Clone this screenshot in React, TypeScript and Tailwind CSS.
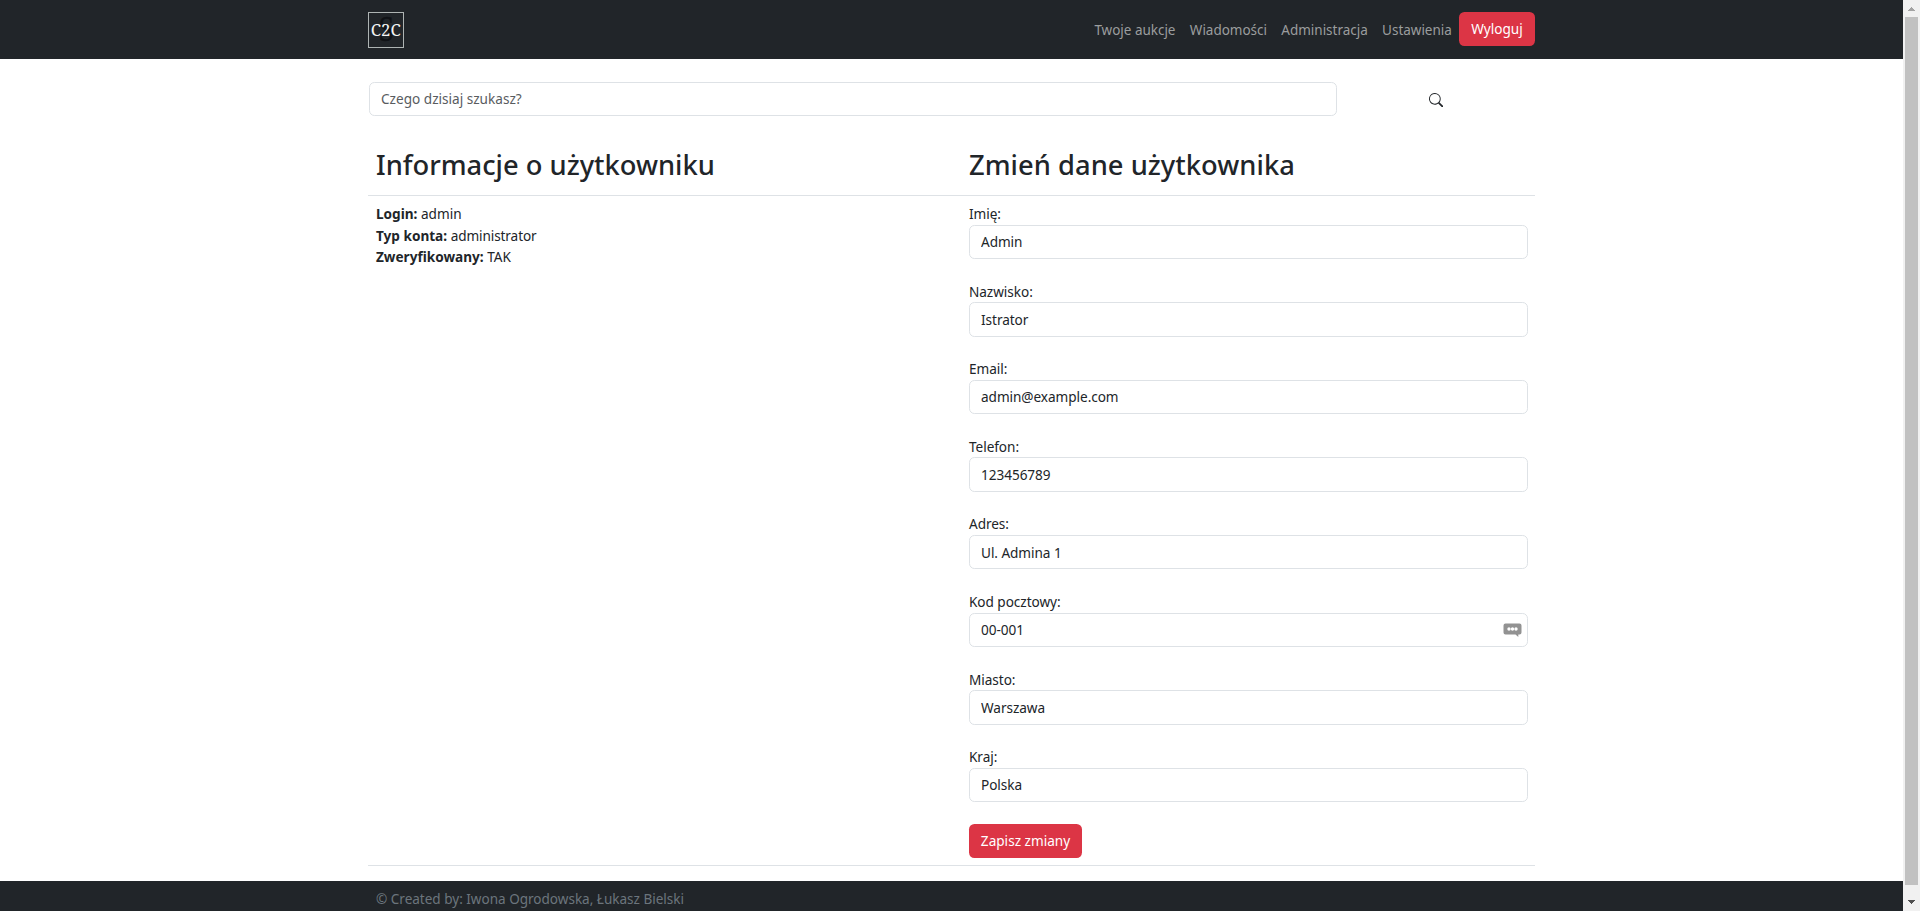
import React from "react";

const fields = [
  { label: "Imię:", value: "Admin" },
  { label: "Nazwisko:", value: "Istrator" },
  { label: "Email:", value: "admin@example.com" },
  { label: "Telefon:", value: "123456789" },
  { label: "Adres:", value: "Ul. Admina 1" },
  { label: "Kod pocztowy:", value: "00-001", hint: true },
  { label: "Miasto:", value: "Warszawa" },
  { label: "Kraj:", value: "Polska" },
];

const links = ["Twoje aukcje", "Wiadomości", "Administracja", "Ustawienia"];

function Logo() {
  return (
    <svg className="overflow-visible" width="36" height="36" viewBox="0 0 36 36">
      <rect x="0.5" y="0.5" width="35" height="35" fill="none" stroke="#aeb4b3" />
      <text transform="translate(10.5 29) scale(0.8 1)" fontFamily="Liberation Serif, serif" fontSize="35" fill="#101216" stroke="#101216" strokeWidth="0.5">S</text>
      <text transform="translate(2.800 24.300) scale(0.920 1)" fontFamily="Noto Serif, DejaVu Serif, serif" fontSize="17" fill="#f4f4f4" textLength="32.500" lengthAdjust="spacingAndGlyphs">C2C</text>
    </svg>
  );
}

function HintIcon() {
  return (
    <svg className="absolute right-[6px] top-[10px]" width="19" height="15" viewBox="0 0 19 15">
      <path d="M2.500 0.500h14q2 0 2 2v7q0 2-2 2h-1.200v2.500L12.500 11.500H2.500q-2 0-2-2v-7q0-2 2-2z" fill="#929292" />
      <g fill="#fff">
        <circle cx="6" cy="6" r="1.700" />
        <circle cx="9.500" cy="6" r="1.700" />
        <circle cx="13" cy="6" r="1.700" />
      </g>
    </svg>
  );
}

function Scrollbar() {
  return (
    <div className="flex h-full w-[17px] flex-col items-center bg-[#f1f1f1]">
      <div className="flex h-[17px] items-center justify-center">
        <svg width="7" height="4" viewBox="0 0 7 4" shapeRendering="crispEdges"><path d="M3 0h1v1h1v1h1v1h1v1H0V3h1V2h1V1h1z" fill="#a3a3a3" /></svg>
      </div>
      <div className="h-[868px] w-[13px] bg-[#c1c1c1]" />
      <div className="flex grow items-start justify-center pt-[15px]">
        <svg width="7" height="4" viewBox="0 0 7 4" shapeRendering="crispEdges"><path d="M0 0h7v1H6v1H5v1H4v1H3V3H2V2H1V1H0z" fill="#505050" /></svg>
      </div>
    </div>
  );
}

export default function App() {
  return (
    <div className="flex h-[911px] w-full overflow-hidden bg-white font-['Noto_Sans',sans-serif] text-[13.600px] leading-[21.600px] text-[#212529]">
      <div className="flex min-w-0 grow flex-col">
        <header className="flex h-[59px] shrink-0 justify-center bg-[#212529]">
          <div className="flex w-[1167px] items-start justify-between pt-3">
            <Logo />
            <nav className="flex items-start text-[#9b9d9e]">
              {links.map((l) => (
                <a key={l} className="mr-[14.400px] pt-[8px] text-[13.500px] tracking-[-0.020px] last-of-type:mr-[7.200px]">{l}</a>
              ))}
              <button className="h-[34px] w-[76px] rounded-[5.400px] bg-[#dc3545] pb-[1px] text-white">Wyloguj</button>
            </nav>
          </div>
        </header>

        <main className="mx-auto flex w-[1167px] grow flex-col">
          <div className="mt-[23px] flex h-[34px] pl-[1px]">
            <input
              className="h-[34px] w-[968px] rounded-[5.400px] border border-[#dee2e6] px-[11px] pb-[1px] placeholder:text-[#595c5f]"
              placeholder="Czego dzisiaj szukasz?"
            />
            <button className="flex w-[198px] items-center justify-center pt-[2px]">
              <svg width="14.400" height="14.400" viewBox="0 0 16 16" fill="currentColor">
                <path d="M11.742 10.344a6.500 6.500 0 1 0-1.397 1.398h-.001q.044.060.098.115l3.850 3.850a1 1 0 0 0 1.415-1.414l-3.850-3.850a1 1 0 0 0-.115-.1zM12 6.500a5.500 5.500 0 1 1-11 0 5.500 5.500 0 0 1 11 0" />
              </svg>
            </button>
          </div>

          <div className="mt-[29px] grid h-[51px] grid-cols-[593px_1fr] border-b border-[#dee2e6] pl-[8px] text-[27.300px] font-medium leading-[39px]">
            <h2>Informacje o użytkowniku</h2>
            <h2 className="tracking-[0.040px]">Zmień dane użytkownika</h2>
          </div>

          <div className="grid h-[670px] grid-cols-[593px_559px] border-b border-[#dee2e6] pl-[8px] pt-[7px]">
            <div>
              <p><b>Login:</b> admin</p>
              <p><b>Typ konta:</b> <span className="tracking-[-0.100px]">administrator</span></p>
              <p><b>Zweryfikowany:</b> TAK</p>
            </div>
            <form className="tracking-[-0.050px]">
              {fields.map((f) => (
                <div key={f.label} className="h-[77.600px]">
                  <label className="block">{f.label}</label>
                  <div className="relative">
                    <input
                      className="block h-[34.400px] w-full rounded-[5.400px] border border-[#dee2e6] px-[11px]"
                      defaultValue={f.value}
                    />
                    {f.hint && <HintIcon />}
                  </div>
                </div>
              ))}
              <button type="button" className="block h-[34px] w-[113px] rounded-[5.400px] bg-[#dc3545] tracking-normal text-white">Zapisz zmiany</button>
            </form>
          </div>
        </main>

        <footer className="flex h-[30px] shrink-0 justify-center bg-[#212529] text-[13.550px] text-[#6c757d]">
          <p className="w-[1167px] pl-2 pt-[8px] tracking-[-0.010px]">© Created by: Iwona Ogrodowska, Łukasz Bielski</p>
        </footer>
      </div>
      <Scrollbar />
    </div>
  );
}
